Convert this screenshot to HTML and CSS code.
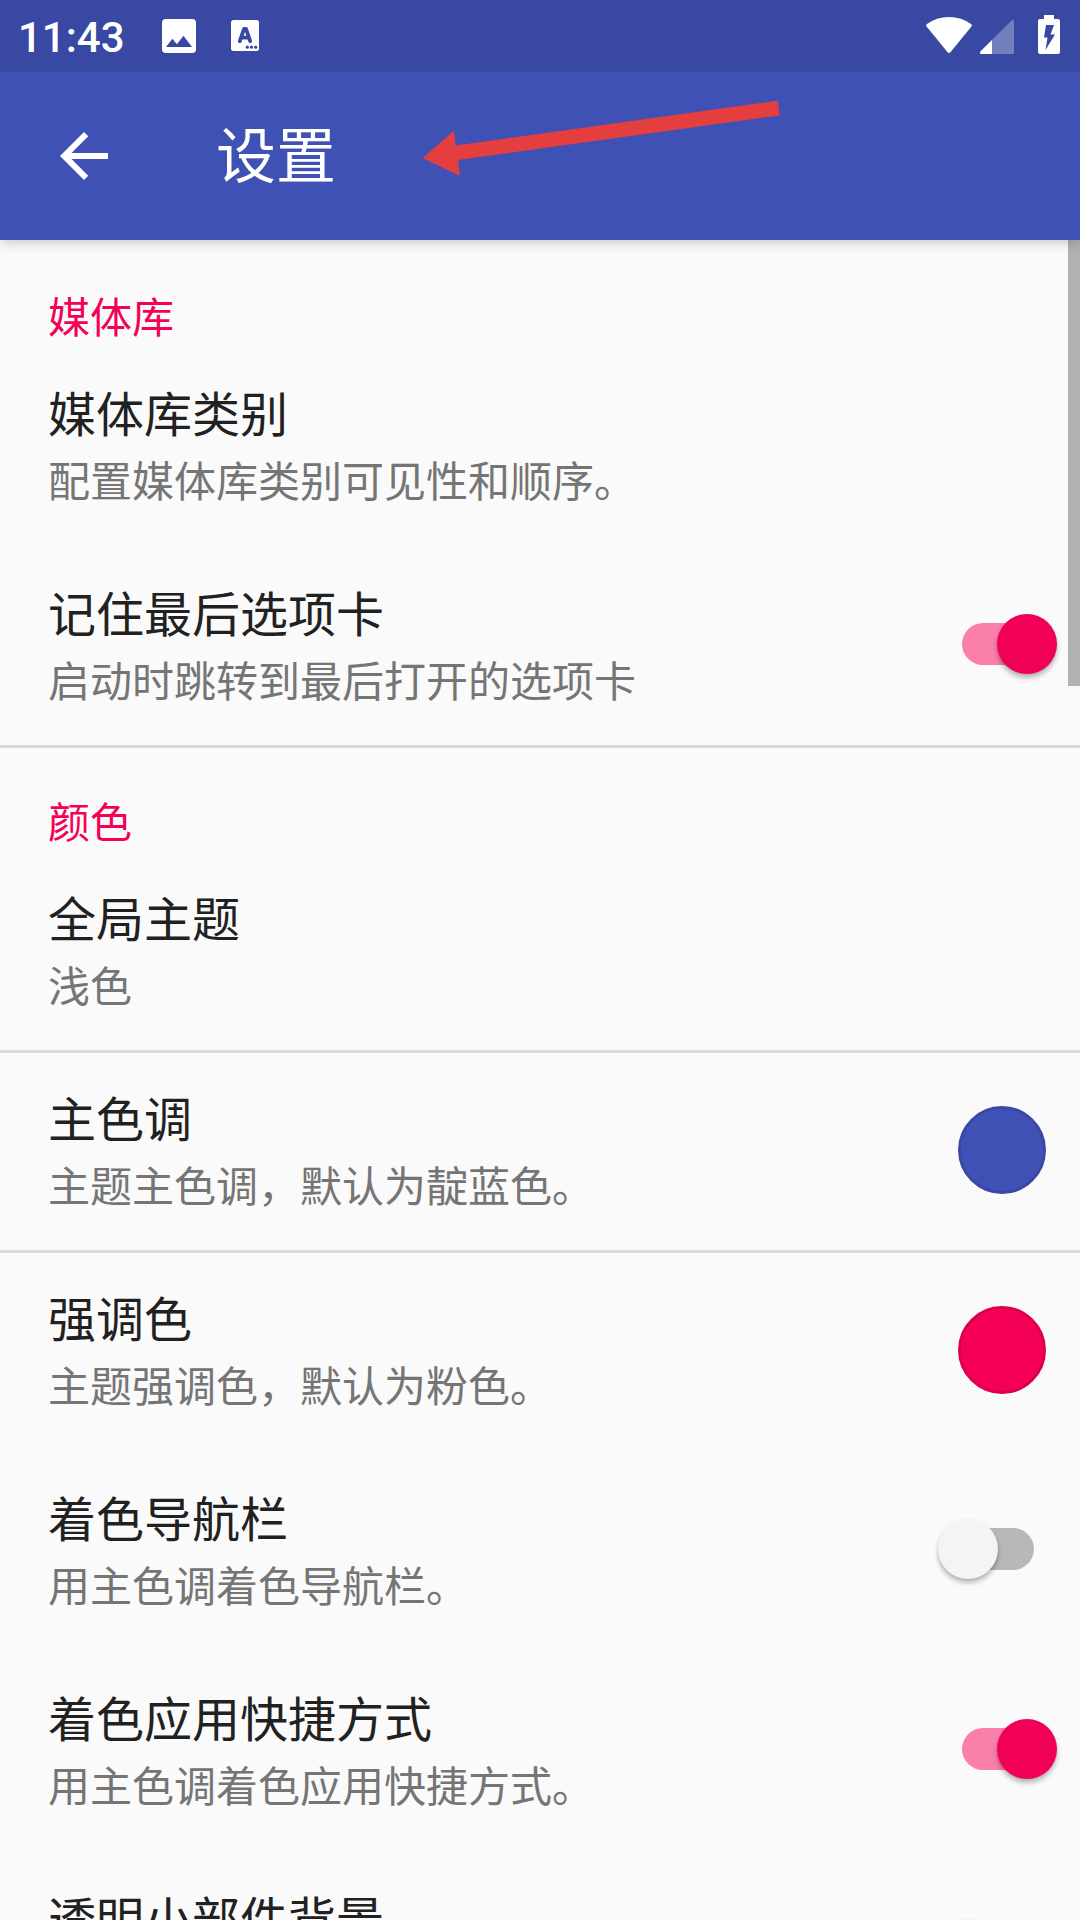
FILE: index.html
```
<!DOCTYPE html>
<html lang="zh-CN">
<head>
  <meta charset="UTF-8" />
  <meta name="viewport" content="width=device-width, initial-scale=1.0"/>
  <title>设置</title>
  <link rel="stylesheet" href="styles.css">
</head>
<body>

  <div class="status-bar">
    <div class="status-left">
      <span class="clock">11:43</span>
      <svg class="icon-image" viewBox="0 0 34 34">
        <path fill="#fff" fill-rule="evenodd" d="M3.8 0h26.4A3.8 3.8 0 0 1 34 3.8v26.4a3.8 3.8 0 0 1-3.8 3.8H3.8A3.8 3.8 0 0 1 0 30.2V3.8A3.8 3.8 0 0 1 3.8 0zM10.4 19.8L4 28h26l-8.5-11.3-6.6 8.5z"/>
      </svg>
      <svg class="icon-font" viewBox="0 0 28 31">
        <rect width="28" height="31" rx="2.5" fill="#fff"/>
        <path d="M8.8 21.2L13 8.800h2l4.200 12.400M10.500 17.600h7" fill="none" stroke="#3949a3" stroke-width="3.800" stroke-linecap="round" stroke-linejoin="round"/>
        <circle cx="16.3" cy="27.2" r="1.6" fill="#3949a3"/>
        <circle cx="20.5" cy="27.2" r="1.6" fill="#3949a3"/>
        <circle cx="24.7" cy="27.2" r="1.6" fill="#3949a3"/>
      </svg>
    </div>
    <div class="status-right">
      <svg class="icon-wifi" viewBox="0 0 46 36">
        <path fill="#fff" d="M.6 9.6Q-.4 8.2 1 7.1Q10.500 0 23 0T45 7.100Q46.400 8.200 45.400 9.600L24.400 35.200Q23 36.800 21.600 35.200z"/>
      </svg>
      <svg class="icon-cell" viewBox="0 0 34 34">
        <path fill="#fff" fill-opacity=".3" d="M31.300.7Q34-1.200 34 1.500V32.500Q34 34 32.500 34H1.500Q-1 34 .7 31.300z"/>
        <path fill="#fff" d="M12 20v14H1.500Q-1 34 .7 31.300z"/>
      </svg>
      <svg class="icon-battery" viewBox="0 0 22 39">
        <path fill="#fff" fill-rule="evenodd" d="M6 0h10v4h4q2 0 2 2v31q0 2-2 2H2q-2 0-2-2V6q0-2 2-2h4zM8 10L6 22.500h3.500L7.500 35 17 19.500h-4.500L16 10z"/>
      </svg>
    </div>
  </div>

  <div class="toolbar">
    <svg class="back" viewBox="0 0 24 24">
      <path fill="#fff" d="M20 11H7.830l5.590-5.590L12 4l-8 8 8 8 1.410-1.410L7.830 13H20v-2z"/>
    </svg>
    <h1>设置</h1>
    <svg class="pointer" viewBox="0 0 358 76">
      <path fill="#e53e3e" d="M.7 58L32 30.500l1.700 15L355.700.7l2 14.700L36.300 60l1.500 16z"/>
    </svg>
  </div>

  <div class="list">
    <div class="scrollbar"></div>

    <div class="category">媒体库</div>
    <div class="item">
      <div class="text">
        <div class="title">媒体库类别</div>
        <div class="summary">配置媒体库类别可见性和顺序。</div>
      </div>
    </div>
    <div class="item">
      <div class="text">
        <div class="title">记住最后选项卡</div>
        <div class="summary">启动时跳转到最后打开的选项卡</div>
      </div>
      <div class="switch on"><span class="thumb"></span></div>
    </div>

    <div class="category divider">颜色</div>
    <div class="item">
      <div class="text">
        <div class="title">全局主题</div>
        <div class="summary">浅色</div>
      </div>
    </div>
    <div class="item divider">
      <div class="text">
        <div class="title">主色调</div>
        <div class="summary">主题主色调，默认为靛蓝色。</div>
      </div>
      <div class="swatch primary"></div>
    </div>
    <div class="item divider">
      <div class="text">
        <div class="title">强调色</div>
        <div class="summary">主题强调色，默认为粉色。</div>
      </div>
      <div class="swatch accent"></div>
    </div>
    <div class="item">
      <div class="text">
        <div class="title">着色导航栏</div>
        <div class="summary">用主色调着色导航栏。</div>
      </div>
      <div class="switch"><span class="thumb"></span></div>
    </div>
    <div class="item">
      <div class="text">
        <div class="title">着色应用快捷方式</div>
        <div class="summary">用主色调着色应用快捷方式。</div>
      </div>
      <div class="switch on"><span class="thumb"></span></div>
    </div>
    <div class="item">
      <div class="text">
        <div class="title">透明小部件背景</div>
      </div>
      <div class="switch"><span class="thumb"></span></div>
    </div>
  </div>

</body>
</html>
```
FILE: styles.css
```
* {
  box-sizing: border-box;
}

body {
  margin: 0;
  height: 1920px;
  overflow: hidden;
  display: flex;
  flex-direction: column;
  font-family: Roboto, 'Noto Sans CJK SC', sans-serif;
  background: #fafafa;
  color: #212121;
}

svg {
  display: block;
  flex: none;
}

.status-bar {
  position: relative;
  z-index: 2;
  flex: none;
  height: 72px;
  padding: 0 20px 0 18px;
  display: flex;
  justify-content: space-between;
  background: #3949a3;
  color: white;
}

.status-left,
.status-right {
  display: flex;
  align-items: flex-start;
}

.clock {
  width: 144px;
  font-size: 42px;
  font-weight: 500;
  line-height: 76px;
}

.icon-image {
  width: 34px;
  height: 34px;
  margin-top: 19px;
}

.icon-font {
  width: 28px;
  height: 31px;
  margin: 20px 0 0 35px;
}

.icon-wifi {
  width: 46px;
  height: 36px;
  margin-top: 17px;
}

.icon-cell {
  width: 34px;
  height: 34px;
  margin: 20px 0 0 8px;
}

.icon-battery {
  width: 22px;
  height: 39px;
  margin: 15px 0 0 24px;
}

.toolbar {
  position: relative;
  z-index: 1;
  flex: none;
  height: 168px;
  padding-left: 48px;
  display: flex;
  align-items: center;
  background: #3f51b5;
  color: white;
  box-shadow: 0 2px 12px rgba(0, 0, 0, 0.22);
}

.back {
  width: 72px;
  height: 72px;
}

h1 {
  margin: 4px 0 0 96px;
  font-size: 60px;
  font-weight: 400;
  line-height: 88px;
}

/* red arrow over the toolbar */
.pointer {
  position: absolute;
  left: 422px;
  top: 28px;
  width: 358px;
  height: 76px;
}

.list {
  position: relative;
  flex: 1;
  min-height: 0;
  overflow: hidden;
}

.scrollbar {
  position: absolute;
  top: 0;
  right: 0;
  width: 12px;
  height: 446px;
  background: #b2b2b2;
}

.category {
  height: 105px;
  padding: 48px 48px 0;
  font-size: 42px;
  line-height: 61px;
  color: #f50057;
}

.item {
  height: 200px;
  padding-left: 48px;
  display: flex;
  justify-content: space-between;
  align-items: center;
}

.divider {
  box-shadow: inset 0 3px #dadada;
}

.text {
  align-self: flex-start;
  padding-top: 36px;
}

.title {
  font-size: 48px;
  line-height: 70px;
}

.summary {
  margin-top: 1px;
  font-size: 42px;
  line-height: 61px;
  color: #757575;
}

.switch {
  position: relative;
  width: 72px;
  height: 42px;
  margin: 0 46px 2px 0;
  border-radius: 21px;
  background: #b8b8b8;
}

.switch.on {
  background: #fa7fab;
}

.thumb {
  position: absolute;
  top: -9px;
  left: -24px;
  width: 60px;
  height: 60px;
  border-radius: 50%;
  background: #f4f4f4;
  box-shadow: 0 4px 5px rgba(0, 0, 0, 0.26), 0 1px 2px rgba(0, 0, 0, 0.08);
}

.on .thumb {
  left: 35px;
  background: #f00057;
}

.swatch {
  width: 88px;
  height: 88px;
  margin-right: 34px;
  border-radius: 50%;
}

.primary {
  background: #3f51b5;
  border: 3px solid #3949a3;
}

.accent {
  background: #f50057;
  border: 3px solid #dc004e;
}
```
